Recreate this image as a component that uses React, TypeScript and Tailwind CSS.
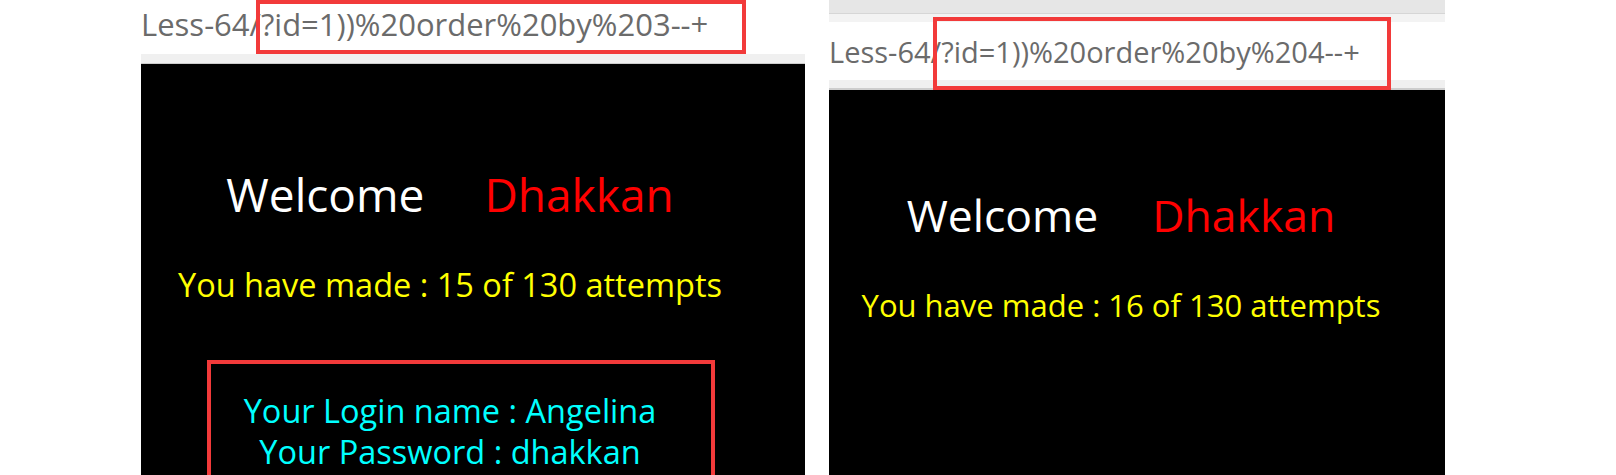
import React from "react";

function Greeting({ size, gap }: { size: "lg" | "md"; gap: string }) {
  return (
    <div
      className={
        size === "lg"
          ? "flex justify-center text-[46px] leading-none gap-[60px]"
          : "flex justify-center text-[44.5px] leading-none gap-[54px]"
      }
      data-gap={gap}
    >
      <span className="text-white">Welcome</span>
      <span className="text-[#ff0000]">Dhakkan</span>
    </div>
  );
}

export default function App() {
  return (
    <div className="w-[1616px] h-[475px] bg-white overflow-hidden flex pl-[141px] gap-[24px] font-['Open_Sans',sans-serif]">
      {/* Left screenshot */}
      <div className="w-[664px] h-[475px] flex flex-col shrink-0">
        <div className="relative h-[54px] shrink-0">
          <div className="pt-[9px] text-[31px] leading-none text-[#6b6b6b] whitespace-nowrap">
            Less-64/?id=1))%20order%20by%203--+
          </div>
          <div className="absolute left-[115px] top-0 w-[490px] h-[54px] border-[4px] border-[#f23a3a]" />
        </div>
        <div className="h-[10px] shrink-0 bg-[#f0f0f0] border-b border-[#cdcdcd]" />
        <div className="flex-1 bg-black pr-[46px] pt-[107px] flex flex-col">
          <Greeting size="lg" gap="60" />
          <div className="mt-[52px] text-center text-[32.5px] leading-none text-[#ffff00] whitespace-nowrap">
            You have made : 15 of 130 attempts
          </div>
          <div className="mt-[58px] ml-[66px] w-[508px] border-[4px] border-[#f23a3a] pt-[26px] pb-[40px] pr-[22px] text-center text-[32.5px] leading-[41px] text-[#00ffff] whitespace-nowrap">
            <div>Your Login name : Angelina</div>
            <div>Your Password : dhakkan</div>
          </div>
        </div>
      </div>

      {/* Right screenshot */}
      <div className="w-[616px] h-[475px] flex flex-col shrink-0">
        <div className="relative h-[90px] shrink-0 flex flex-col">
          <div className="h-[14px] bg-[#e6e6e6] border-b border-[#d6d6d6]" />
          <div className="h-[8px] bg-[#f3f3f3]" />
          <div className="h-[58px] bg-white pt-[15px] text-[29px] leading-none text-[#6b6b6b] whitespace-nowrap">
            Less-64/?id=1))%20order%20by%204--+
          </div>
          <div className="h-[10px] bg-[#f0f0f0] border-b-2 border-[#cdcdcd]" />
          <div className="absolute left-[104px] top-[17px] w-[458px] h-[73px] border-[4px] border-[#f23a3a]" />
        </div>
        <div className="flex-1 bg-black pr-[32px] pt-[103px] flex flex-col">
          <Greeting size="md" gap="54" />
          <div className="mt-[52px] text-center text-[31px] leading-none text-[#ffff00] whitespace-nowrap">
            You have made : 16 of 130 attempts
          </div>
        </div>
      </div>
    </div>
  );
}
